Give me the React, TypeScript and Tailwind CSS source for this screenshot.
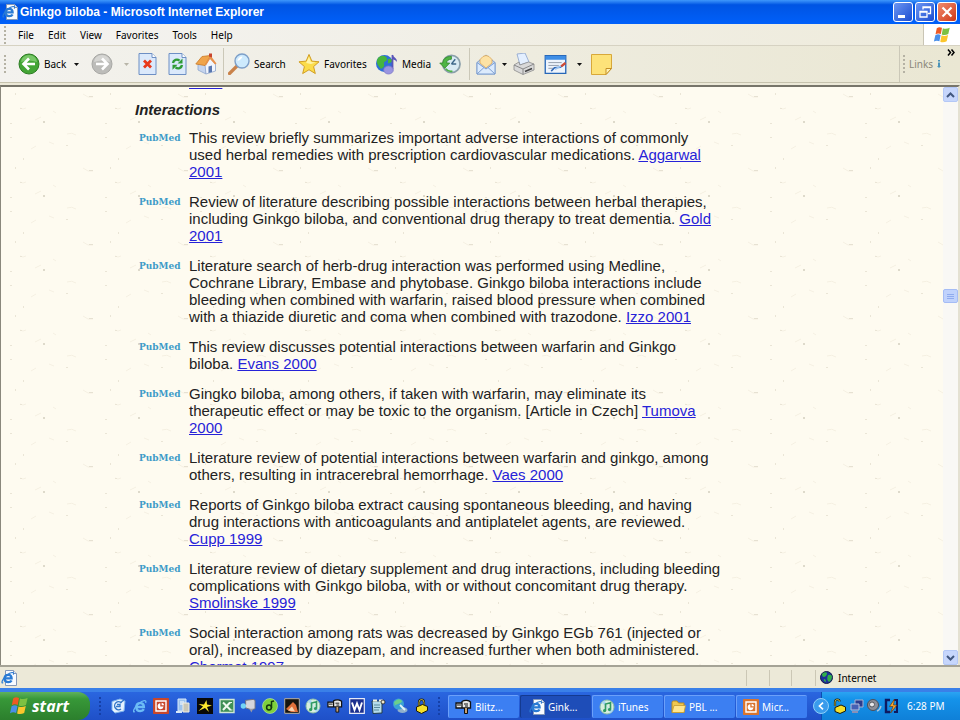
import { Fragment, type ReactNode } from 'react';

interface Citation {
  lines: string[];
  /** Parts of the link text; a second part wraps onto the next line. */
  link: string[];
}

const citations: Citation[] = [
  {
    lines: [
      'This review briefly summarizes important adverse interactions of commonly',
      'used herbal remedies with prescription cardiovascular medications. ',
    ],
    link: ['Aggarwal', '2001'],
  },
  {
    lines: [
      'Review of literature describing possible interactions between herbal therapies,',
      'including Ginkgo biloba, and conventional drug therapy to treat dementia. ',
    ],
    link: ['Gold', '2001'],
  },
  {
    lines: [
      'Literature search of herb-drug interaction was performed using Medline,',
      'Cochrane Library, Embase and phytobase. Ginkgo biloba interactions include',
      'bleeding when combined with warfarin, raised blood pressure when combined',
      'with a thiazide diuretic and coma when combined with trazodone. ',
    ],
    link: ['Izzo 2001'],
  },
  {
    lines: ['This review discusses potential interactions between warfarin and Ginkgo', 'biloba. '],
    link: ['Evans 2000'],
  },
  {
    lines: [
      'Gingko biloba, among others, if taken with warfarin, may eliminate its',
      'therapeutic effect or may be toxic to the organism. [Article in Czech] ',
    ],
    link: ['Tumova', '2000'],
  },
  {
    lines: [
      'Literature review of potential interactions between warfarin and ginkgo, among',
      'others, resulting in intracerebral hemorrhage. ',
    ],
    link: ['Vaes 2000'],
  },
  {
    lines: [
      'Reports of Ginkgo biloba extract causing spontaneous bleeding, and having',
      'drug interactions with anticoagulants and antiplatelet agents, are reviewed.',
      '',
    ],
    link: ['Cupp 1999'],
  },
  {
    lines: [
      'Literature review of dietary supplement and drug interactions, including bleeding',
      'complications with Ginkgo biloba, with or without concomitant drug therapy.',
      '',
    ],
    link: ['Smolinske 1999'],
  },
  {
    lines: [
      'Social interaction among rats was decreased by Ginkgo EGb 761 (injected or',
      'oral), increased by diazepam, and increased further when both administered.',
      '',
    ],
    link: ['Chermet 1997'],
  },
];

/* ---------- shared drawings ---------- */

function WindowsFlag({ size }: { size: number }) {
  return (
    <svg width={size} height={size} viewBox="0 0 20 20" aria-hidden="true">
      <path d="M4.200 2.400C6 1 8 1 10 2L8.700 9C6.800 8 4.800 8 2.800 9.200z" fill="#ee5a24" />
      <path d="M11 2.400C13 3.400 15.500 3.300 18.600 2L17 9C14.500 10.200 11.800 10.300 9.700 9.400z" fill="#7cc142" />
      <path d="M2.600 10.200C4.600 9 6.500 9 8.500 10L7.100 17C5.400 16 3.200 16 1 17.200z" fill="#4a8fe8" />
      <path d="M9.500 10.400C11.600 11.400 14 11.200 16.800 10.100L15.200 17C12.800 18.200 10.200 18.300 8.100 17.400z" fill="#fbc62c" />
    </svg>
  );
}

function IeLetter({ color }: { color: string }) {
  return (
    <g fill="none" stroke={color}>
      <path d="M3.500 8.400H10.600C10.600 5.800 9.200 4.800 7.200 4.800S3.600 6.200 3.600 8.600 5 12.200 7.300 12.200C8.800 12.200 10 11.600 10.600 10.500" strokeWidth="2.300" />
      <path d="M2.200 12.600C-.2 14.500 1 9 5.500 5.400S13.500 1.600 12.300 4.600" strokeWidth="1.200" />
    </g>
  );
}

function IePage() {
  return (
    <svg width="16" height="16" viewBox="0 0 16 16" aria-hidden="true">
      <path d="M4.500.5h8l3 3v12h-11z" fill="#f8fbff" stroke="#8498b8" />
      <path d="M12.500.5v3h3" fill="#dfe8f5" stroke="#8498b8" />
      <IeLetter color="#2a7bd4" />
    </svg>
  );
}

function IeLogo() {
  return (
    <svg width="16" height="16" viewBox="0 0 14 15" aria-hidden="true">
      <IeLetter color="#6cbcf6" />
    </svg>
  );
}

function Mailbox() {
  return (
    <svg width="17" height="16" viewBox="0 0 17 16" aria-hidden="true">
      <path d="M1 4h6v5H1zM7 2.500c3-2 7-1 8.500.5v6H7z" fill="#e8e8e8" stroke="#111" strokeWidth="1.300" />
      <path d="M2 6h4M9 5h4M10 7h3" stroke="#111" />
      <path d="M9.500 9v5.500h3V9" fill="#c8a070" stroke="#111" />
    </svg>
  );
}

function ItunesDisc() {
  return (
    <svg width="16" height="16" viewBox="0 0 16 16" aria-hidden="true">
      <circle cx="8" cy="8" r="7" fill="#d6eedd" stroke="#8fc0a8" />
      <path d="M8 8L2.500 3.800A7 7 0 0 1 6 1.500zM8 8l6 3.500a7 7 0 0 1-3 2.800z" fill="#a9d6f2" />
      <path d="M6.500 11.500V5l5-1.300v6.500" fill="none" stroke="#2f9a62" strokeWidth="1.600" />
      <circle cx="5.600" cy="11.600" r="1.600" fill="#2f9a62" />
      <circle cx="10.500" cy="10.500" r="1.600" fill="#2f9a62" />
    </svg>
  );
}

function PowerPoint({ fill = '#c8472b' }: { fill?: string }) {
  return (
    <svg width="16" height="16" viewBox="0 0 16 16" aria-hidden="true">
      <path d="M.5.5h15v15H.5z" fill={fill} stroke={fill} />
      <path d="M3 3h10v10H3z" fill={fill} stroke="#fff" strokeWidth="1.400" />
      <path d="M7.300 5.200A3 3 0 1 0 10.600 8.600H7.300z" fill="#fff" />
      <path d="M8.600 4.800v2.500h2.600a3 3 0 0 0-2.600-2.500z" fill="#fff" />
    </svg>
  );
}

function Grip({ light = false }: { light?: boolean }) {
  return (
    <div className="flex flex-col gap-[2px]" aria-hidden="true">
      {[0, 1, 2, 3, 4].map((i) => (
        <span key={i} className={light ? 'size-[2px] bg-[#1540a8]' : 'size-[2px] bg-[#b5b2a4]'} />
      ))}
    </div>
  );
}

/* ---------- window chrome ---------- */

function TitleBar() {
  return (
    <header className="flex h-6 shrink-0 items-center gap-[2px] bg-linear-to-b from-[#3f97fb] via-[#0054e3] via-20% to-[#0060fa] pr-[3px] pl-[2px]">
      <IePage />
      <h1 className="flex-1 truncate font-['Liberation_Sans',Arial,sans-serif] text-[12px] leading-4 font-bold text-white">
        Ginkgo biloba - Microsoft Internet Explorer
      </h1>
      <div className="flex gap-[2px]">
        <button aria-label="Minimize" className="size-5 rounded-[3px] border border-white bg-linear-to-br from-[#6c95f2] to-[#1b4bd0]">
          <svg viewBox="0 0 18 18" className="size-full"><path d="M4 12h7v3H4z" fill="#fff" /></svg>
        </button>
        <button aria-label="Restore" className="size-5 rounded-[3px] border border-white bg-linear-to-br from-[#6c95f2] to-[#1b4bd0]">
          <svg viewBox="0 0 18 18" className="size-full">
            <path d="M7 6.500V4h7.500v6.500H12M7 4.500h7.500M4 8.500h7V14H4zM4 9h7" fill="none" stroke="#fff" strokeWidth="1.300" />
          </svg>
        </button>
        <button aria-label="Close" className="size-5 rounded-[3px] border border-white bg-linear-to-br from-[#f08a6c] to-[#cf3510]">
          <svg viewBox="0 0 18 18" className="size-full"><path d="M4.500 4.500l9 9M13.500 4.500l-9 9" stroke="#fff" strokeWidth="2.200" /></svg>
        </button>
      </div>
    </header>
  );
}

function MenuBar() {
  return (
    <nav className="flex h-[22px] shrink-0 items-stretch border-b border-[#d6d2c2] bg-linear-to-r from-[#f4f3f1] to-[#eeebdb]">
      <div className="flex w-[18px] items-center pl-1"><Grip /></div>
      <div className="flex flex-1 items-center gap-[14px]">
        {['File', 'Edit', 'View', 'Favorites', 'Tools', 'Help'].map((m) => (
          <button key={m}>{m}</button>
        ))}
      </div>
      <div className="flex w-[37px] items-center justify-center border-l border-[#c9c5b5] bg-white">
        <WindowsFlag size={18} />
      </div>
    </nav>
  );
}

function DropArrow({ label, width = 'w-3', muted = false }: { label: string; width?: string; muted?: boolean }) {
  return (
    <button aria-label={label} className={`flex shrink-0 items-center justify-center ${width}`}>
      <svg width="5" height="3" viewBox="0 0 5 3"><path d="M0 0h5L2.500 3z" fill={muted ? '#b8b5a8' : '#111'} /></svg>
    </button>
  );
}

function ToolButton({ label, text, width, children }: { label: string; text?: boolean; width: string; children: ReactNode }) {
  return (
    <button aria-label={label} className={`flex h-8 shrink-0 items-center gap-1 ${text ? 'justify-start' : 'justify-center'} ${width}`}>
      {children}
      {text && <span>{label}</span>}
    </button>
  );
}

function Separator() {
  return <div className="mx-1 h-8 w-px shrink-0 bg-[#cbc8b8]" />;
}

function ToolBar() {
  return (
    <div className="flex h-[37px] shrink-0 items-center border-b border-[#c6c2ad] bg-linear-to-r from-[#f3f2ee] to-[#eae7d3]">
      <div className="flex w-[18px] items-center pl-1"><Grip /></div>
      <ToolButton label="Back" text width="w-[50px]">
        <svg width="22" height="22" viewBox="0 0 22 22">
          <circle cx="11" cy="11" r="10" fill="#43a535" stroke="#2c7d23" />
          <path d="M3 9a8 7 0 0 1 16 0q-8-3-16 0z" fill="#8fd67f" opacity=".7" />
          <path d="M17 11H6M11 5.500L5.500 11l5.500 5.500" fill="none" stroke="#fff" strokeWidth="2.600" />
        </svg>
      </ToolButton>
      <DropArrow label="Back history" width="w-4" />
      <ToolButton label="Forward" width="w-9">
        <svg width="22" height="22" viewBox="0 0 22 22">
          <circle cx="11" cy="11" r="10" fill="#bcbcb9" stroke="#a8a8a5" />
          <path d="M3 9a8 7 0 0 1 16 0q-8-3-16 0z" fill="#dcdcda" opacity=".8" />
          <path d="M5 11h11M11 5.500l5.500 5.500-5.500 5.500" fill="none" stroke="#fff" strokeWidth="2.600" />
        </svg>
      </ToolButton>
      <DropArrow label="Forward history" muted />
      <ToolButton label="Stop" width="w-[30px]">
        <svg width="19" height="22" viewBox="0 0 19 22">
          <path d="M1 .5h13l4 4v17H1z" fill="#dbe9fb" stroke="#6d8fc4" />
          <path d="M14 .5v4h4" fill="#fff" stroke="#6d8fc4" />
          <path d="M6 7.500l7 7M13 7.500l-7 7" stroke="#e8381b" strokeWidth="2.800" />
        </svg>
      </ToolButton>
      <ToolButton label="Refresh" width="w-[30px]">
        <svg width="19" height="22" viewBox="0 0 19 22">
          <path d="M1 .5h13l4 4v17H1z" fill="#dbe9fb" stroke="#6d8fc4" />
          <path d="M14 .5v4h4" fill="#fff" stroke="#6d8fc4" />
          <path d="M5 10c.5-3 4-4.500 6.500-2.300M14 12c-.5 3-4 4.500-6.500 2.300" fill="none" stroke="#2e9b34" strokeWidth="2.400" />
          <path d="M14.500 5.500v5h-5zM4.500 16.800v-5h5z" fill="#2e9b34" />
        </svg>
      </ToolButton>
      <ToolButton label="Home" width="w-[27px]">
        <svg width="22" height="22" viewBox="0 0 22 22">
          <path d="M3 11v6l8 4V10z" fill="#c5d4ee" stroke="#8ea4cc" strokeWidth=".8" />
          <path d="M10 12l5-7 5.500 6v7L11 21z" fill="#f2f6fd" stroke="#8ea4cc" strokeWidth=".8" />
          <path d="M.8 11L7 3.500l8.500-1L10 12.500z" fill="#f0a44a" stroke="#c97a26" strokeWidth=".8" />
          <path d="M15.500 2.500l6 8-1.500 1-5-5.500-4 6.500-1-1z" fill="#e8914a" />
          <path d="M14 .5h3v4l-3-1z" fill="#c8452c" />
          <path d="M13.500 13.500l3.500-1v6.500l-3.500 1z" fill="#5877b0" />
        </svg>
      </ToolButton>
      <Separator />
      <ToolButton label="Search" text width="w-[70px]">
        <svg width="22" height="22" viewBox="0 0 22 22">
          <path d="M1.500 20.500l8-8" stroke="#c9824a" strokeWidth="3.200" strokeLinecap="round" />
          <circle cx="14" cy="8" r="7" fill="#cdeafd" stroke="#7d9fc8" strokeWidth="1.400" />
          <path d="M9.500 8a4.500 4.500 0 0 1 5-4.500q-1 3-5 4.500z" fill="#fff" />
        </svg>
      </ToolButton>
      <ToolButton label="Favorites" text width="w-[77px]">
        <svg width="22" height="22" viewBox="0 0 23 22">
          <path d="M11.500 1l3 7 7.500.7-5.700 5 1.800 7.300-6.600-4-6.600 4 1.800-7.300-5.700-5 7.500-.7z" fill="#fbdc4a" stroke="#d09a1c" strokeLinejoin="round" />
          <path d="M11.500 3.500l2 5.500 5 .5-5 1.500-5-1z" fill="#fff4a8" />
        </svg>
      </ToolButton>
      <ToolButton label="Media" text width="w-[60px]">
        <svg width="23" height="22" viewBox="0 0 23 22">
          <circle cx="9.500" cy="10.500" r="8.500" fill="#2e6fd8" />
          <path d="M3 5c4-4 9-2 9 1s-4 2-3 5-3 6-4 4-5-5-2-10z" fill="#46b53c" />
          <path d="M13 6q3-1 4 1t-4 3.500z" fill="#46b53c" />
          <path d="M17.500 2v14" fill="none" stroke="#5a55b8" strokeWidth="1.800" />
          <path d="M17 1.500c1.500 3 5 3 5 7.500-1.500-2-3-2.500-5-2.500z" fill="#5a55b8" />
          <ellipse cx="13.500" cy="17" rx="4.800" ry="4" fill="#9a95e0" stroke="#7d78c8" strokeWidth=".8" />
        </svg>
      </ToolButton>
      <ToolButton label="History" width="w-[30px]">
        <svg width="22" height="22" viewBox="0 0 23 22">
          <circle cx="13" cy="11" r="9" fill="#d9eaf3" stroke="#8ba0ab" strokeWidth="1.800" />
          <path d="M13 11l4-5M13 11h5" stroke="#3c6688" strokeWidth="1.400" />
          <path d="M13 3C7 3 4 6 4 10H.8l5.200 5.500 5.200-5.500H8c0-2.500 2-4 5-4z" fill="#4fb545" stroke="#2f8428" strokeWidth=".8" />
          <path d="M7 16q3 3.500 7 2.500" fill="none" stroke="#4fb545" strokeWidth="1.800" />
        </svg>
      </ToolButton>
      <Separator />
      <ToolButton label="Mail" width="w-6">
        <svg width="20" height="22" viewBox="0 0 20 22">
          <path d="M1 9.500L10 2l9 7.500V21H1z" fill="#bcd6f6" stroke="#7f9fd0" />
          <path d="M4 10V6.500Q10-1.500 16 6.500V10l-6 5z" fill="#fde2a4" stroke="#dca75a" strokeWidth=".8" />
          <path d="M1 9.500l9 6.500 9-6.500V21H1z" fill="#dcebfd" stroke="#7f9fd0" />
          <path d="M1 21l7-6.500M19 21l-7-6.500" stroke="#7f9fd0" />
        </svg>
      </ToolButton>
      <DropArrow label="Mail options" />
      <ToolButton label="Print" width="w-[27px]">
        <svg width="22" height="22" viewBox="0 0 22 22">
          <path d="M4 1l8-1 4 9-9 3z" fill="#e3efff" stroke="#8aa2cc" strokeWidth=".8" />
          <path d="M1 12l5-3 .8 3L15.500 9l5.500 2v6l-11 4.500L1 17z" fill="#d9d9d9" stroke="#8c8c8c" strokeWidth=".8" />
          <path d="M1 12l9 4 11-5M10 16v5.500" fill="none" stroke="#888" />
          <path d="M12 18.500l7-3" stroke="#444" strokeWidth="1.600" />
        </svg>
      </ToolButton>
      <ToolButton label="Edit" width="w-9">
        <svg width="23" height="19" viewBox="0 0 23 20">
          <path d="M.7.700h21.600v18.600H.700z" fill="#eef4fc" stroke="#2767b8" strokeWidth="1.400" />
          <path d="M1 1h21v4H1z" fill="#3e8ee6" />
          <path d="M4 8h14M4 11h11M4 14h7" stroke="#929cab" />
          <path d="M7 17l3.500-3.500 6-.5 2-1.500" fill="none" stroke="#2f67b8" strokeWidth="1.600" />
          <path d="M11 15l6-3.500" stroke="#9cc4f0" strokeWidth="1.800" />
          <path d="M17.500 12l4.500-3.500" stroke="#cf4a35" strokeWidth="2.600" />
        </svg>
      </ToolButton>
      <DropArrow label="Edit with" />
      <ToolButton label="Discuss" width="w-8">
        <svg width="21" height="21" viewBox="0 0 21 21">
          <path d="M.5.500h20v14l-5.500 6H.500z" fill="#fde279" stroke="#d8a83a" />
          <path d="M20.500 14.500H15v6z" fill="#fff2b4" stroke="#c48f26" />
        </svg>
      </ToolButton>
      <div className="flex-1" />
      <div className="flex h-full w-[61px] items-center border-l border-[#cbc8b8] pl-[3px] text-[#8a877b]">
        <Grip />
        <span className="pl-1">Links</span>
        <svg width="4" height="8" viewBox="0 0 4 8" className="ml-1 shrink-0"><path d="M1 0h2v1.500H1zM1 2.500h2V6h1L2 8 0 6h1z" fill="#4b93b8" /></svg>
        <button aria-label="More links" className="ml-[6px] self-start pt-[3px]">
          <svg width="8" height="7" viewBox="0 0 8 7"><path d="M1 .5l2.500 3L1 6.500M4.500.5L7 3.500l-2.500 3" fill="none" stroke="#000" strokeWidth="1.500" /></svg>
        </button>
      </div>
    </div>
  );
}

/* ---------- document ---------- */

function PaperTexture() {
  return (
    <svg className="absolute inset-0 size-full" aria-hidden="true">
      <defs>
        <pattern id="paper" width="95" height="74" patternUnits="userSpaceOnUse">
          <g fill="none" stroke="#f5f0e2">
            <path d="M82 7l5 3h5M19 21q3 2 6 0M34 33l6-3M66 47q5-2 9 1M30 62l5-3M52 24l3 2M48 55l5 2" />
          </g>
          <path d="M88 9h4v1h-4z" fill="#e6e1d2" />
          <path d="M42 34h2v2h-2z" fill="#dedacb" />
          <path d="M14 6h1v2h-1zM9 50h2v1H9zM9 36h2v1H9zM65 58h2v1h-2zM22 71h1v2h-1zM19 21h2v1h-2z" fill="#eae5d6" />
        </pattern>
      </defs>
      <rect width="100%" height="100%" fill="url(#paper)" />
    </svg>
  );
}

function CitationRow({ lines, link }: Citation) {
  return (
    <li className="flex">
      <span className="w-[52px] shrink-0 pl-[2px] font-['DejaVu_Serif',serif] text-[9px] leading-[18px] font-bold text-[#3f9bc8]">PubMed</span>
      <p>
        {lines.map((line, i) => (
          <Fragment key={i}>
            {i > 0 && <br />}
            {line}
          </Fragment>
        ))}
        <a href="#citation" className="text-[#2622d8] underline">
          {link[0]}
          {link[1] && <><br />{link[1]}</>}
        </a>
      </p>
    </li>
  );
}

function ScrollBar() {
  const box = 'flex size-[15px] items-center justify-center rounded-[2px] border border-[#b4c8f6] bg-[#c6d6fc]';
  return (
    <div className="flex w-[15px] shrink-0 flex-col bg-[#f9f8f5]">
      <button aria-label="Scroll up" className={box}>
        <svg width="9" height="6" viewBox="0 0 9 6"><path d="M1 5l3.500-3.500L8 5" fill="none" stroke="#41577f" strokeWidth="2" /></svg>
      </button>
      <div className="basis-[187px]" />
      <div className="flex h-[14px] shrink-0 flex-col items-center justify-center gap-px rounded-[2px] border border-[#a5bcf5] bg-[#c0d2fc]">
        <span className="h-px w-[7px] bg-[#8fabee]" />
        <span className="h-px w-[7px] bg-[#8fabee]" />
        <span className="h-px w-[7px] bg-[#8fabee]" />
      </div>
      <div className="flex-1" />
      <button aria-label="Scroll down" className={box}>
        <svg width="9" height="6" viewBox="0 0 9 6"><path d="M1 1l3.500 3.500L8 1" fill="none" stroke="#41577f" strokeWidth="2" /></svg>
      </button>
    </div>
  );
}

function Document() {
  return (
    <div className="flex min-h-0 flex-1 border-t-2 border-r-2 border-l border-t-[#77756a] border-r-[#e4e1d2] border-l-[#8a887c]">
      <main className="relative min-w-0 flex-1 overflow-hidden bg-[#fefbf0]">
        <PaperTexture />
        {/* the page is scrolled: the end of the previous section shows above the heading */}
        <div className="relative -mt-[14px] pl-[134px] font-['Liberation_Sans',Arial,sans-serif] text-[15px] leading-[17px] text-[#222]">
          <p className="pl-[54px]"><a href="#previous" className="text-[#2622d8] underline">2000</a></p>
          <h2 className="mt-[11px] mb-[11px] font-bold italic">Interactions</h2>
          <ul className="flex flex-col gap-[13px] pl-[2px]">
            {citations.map((c) => <CitationRow key={c.lines[0]} {...c} />)}
          </ul>
        </div>
      </main>
      <ScrollBar />
    </div>
  );
}

function StatusBar() {
  return (
    <footer className="flex h-[23px] shrink-0 items-center border-t-2 border-t-[#a5a396] bg-[#ece9d8] pl-px">
      <IePage />
      <div className="flex-1" />
      <div className="flex h-4">
        <span className="w-[23px] border-l border-[#cbc7b5]" />
        <span className="w-[22px] border-l border-[#cbc7b5]" />
        <span className="w-6 border-l border-[#cbc7b5]" />
        <div className="flex w-[145px] items-center gap-[5px] border-l border-[#cbc7b5] pl-1">
          <svg width="13" height="13" viewBox="0 0 13 13" aria-hidden="true">
            <circle cx="6.500" cy="6.500" r="6" fill="#1c2f9a" stroke="#111a44" />
            <path d="M2 3q3-3 5-1 0 3-3 4-2 0-2-3zM8 4q4-1 4 2t-3 5q-3-2-1-7zM4 8q2 0 2 3-3-1-2-3z" fill="#2fae4a" />
          </svg>
          <span>Internet</span>
        </div>
      </div>
    </footer>
  );
}

/* ---------- taskbar ---------- */

const quickLaunch: { label: string; icon: ReactNode }[] = [
  {
    label: 'Outlook Express',
    icon: (
      <svg width="16" height="16" viewBox="0 0 16 16">
        <path d="M2 3.500L10 1l5 2-1 10-9 2-3-3z" fill="#e6f2ff" stroke="#7fb4ec" />
        <path d="M11.500 5A4 4 0 1 0 11 11M6 8.500h4V6.500H7" fill="none" stroke="#3476c8" strokeWidth="1.400" />
        <path d="M10 5l4-3" stroke="#3476c8" strokeWidth="1.500" />
      </svg>
    ),
  },
  { label: 'Internet Explorer', icon: <IeLogo /> },
  { label: 'PowerPoint', icon: <PowerPoint /> },
  {
    label: 'Show Desktop',
    icon: (
      <svg width="16" height="16" viewBox="0 0 16 16">
        <path d="M3 1h8v12H3z" fill="#9ec4ee" stroke="#d8e8f8" />
        <path d="M5 4h4M5 6h4" stroke="#fff" />
        <path d="M8 5h6v9H8z" fill="#c9c7b8" stroke="#f0efe6" />
        <path d="M1 13h6v2H1z" fill="#d8e8f8" />
      </svg>
    ),
  },
  {
    label: 'Star',
    icon: (
      <svg width="16" height="16" viewBox="0 0 16 16">
        <path d="M0 0h16v16H0z" fill="#080808" />
        <path d="M9.500 2l.5 4.500 5 1-5 1.500 2 5L8 10l-6.500 3 4.500-4.500L1.500 6 7 6.500z" fill="#ffe92e" />
      </svg>
    ),
  },
  {
    label: 'Excel',
    icon: (
      <svg width="16" height="16" viewBox="0 0 16 16">
        <path d="M1 1.500h14v13H1z" fill="#3f8f56" stroke="#cfe8d4" strokeWidth="1.400" />
        <path d="M4 4.500l7.500 7.500M11 4.500L4 12" stroke="#eef8ee" strokeWidth="2" />
        <path d="M10 4.500h3M11 12h2.500" stroke="#eef8ee" />
      </svg>
    ),
  },
  {
    label: 'Network',
    icon: (
      <svg width="17" height="16" viewBox="0 0 17 16">
        <path d="M6 2l8-1 2 1v9l-4 1-6-2z" fill="#d6d6dc" stroke="#72727c" />
        <path d="M10 11l2 4 2-4" fill="#9a9aa6" />
        <path d="M3 8h4" stroke="#fff" />
        <circle cx="3.500" cy="8" r="2.800" fill="#74d4f4" />
      </svg>
    ),
  },
  {
    label: 'Music',
    icon: (
      <svg width="16" height="16" viewBox="0 0 16 16">
        <circle cx="8" cy="8" r="7.500" fill="#7ed03c" stroke="#c6f0a0" strokeWidth=".6" />
        <circle cx="7" cy="9.500" r="2.400" fill="none" stroke="#13360e" strokeWidth="1.500" />
        <path d="M9.500 10V3.500l2.500-.5" fill="none" stroke="#13360e" strokeWidth="1.500" />
      </svg>
    ),
  },
  {
    label: 'Picture viewer',
    icon: (
      <svg width="16" height="16" viewBox="0 0 16 16">
        <path d="M.7.700h14.600v14.600H.700z" fill="#16140f" stroke="#b8afa2" />
        <path d="M2 11L9 4l3 3 2 7H7z" fill="#e0703a" />
        <path d="M4 12.500l4-4 3 5z" fill="#f8d4b0" />
      </svg>
    ),
  },
  { label: 'iTunes', icon: <ItunesDisc /> },
  { label: 'BlitzMail', icon: <Mailbox /> },
  {
    label: 'Word',
    icon: (
      <svg width="16" height="16" viewBox="0 0 16 16">
        <path d="M.7.700h14.600v14.600H.700z" fill="#1b2f8e" stroke="#e6eaf8" strokeWidth="1.200" />
        <path d="M3 4.500L5.500 12 8 5.500l2.500 6.500L13 4.500" fill="none" stroke="#fff" strokeWidth="1.900" />
      </svg>
    ),
  },
  {
    label: 'Notes',
    icon: (
      <svg width="16" height="16" viewBox="0 0 16 16">
        <path d="M2 3h10v12l-9 .500z" fill="#b4dcec" stroke="#223c48" />
        <path d="M4 7h6M4 9.500h6M4 12h5" stroke="#5a8a9c" />
        <path d="M3 2.500h4M9 2.500h4" stroke="#f4f4e0" strokeWidth="2.200" />
        <circle cx="13" cy="4" r="2" fill="#f0e8c8" stroke="#222" strokeWidth=".8" />
      </svg>
    ),
  },
  {
    label: 'Network drive',
    icon: (
      <svg width="16" height="16" viewBox="0 0 16 16">
        <ellipse cx="10.500" cy="12" rx="5" ry="3" fill="#8fb0cc" />
        <circle cx="6.500" cy="6" r="5.500" fill="#3aa2d4" />
        <path d="M2 4q4-4 7-2t-3 4-3 2z" fill="#6bd08a" />
        <path d="M8 7l5 5" stroke="#dff3fb" strokeWidth="1.800" />
      </svg>
    ),
  },
  {
    label: 'Lock',
    icon: (
      <svg width="14" height="16" viewBox="0 0 14 16">
        <path d="M4 8V4.500q0-3 2.500-3T9 4.500V7" fill="none" stroke="#1c1a08" strokeWidth="2.200" />
        <path d="M4 8V4.500q0-3 2.500-3T9 4.500V7" fill="none" stroke="#e8dc60" strokeWidth=".8" />
        <path d="M1.500 9l6-2.500 5 2v4l-6 3-5-2.500z" fill="#f4e02c" stroke="#1c1a08" />
      </svg>
    ),
  },
];

const tasks: { title: string; icon: ReactNode; active?: boolean }[] = [
  { title: 'Blitz...', icon: <Mailbox /> },
  { title: 'Gink...', icon: <IePage />, active: true },
  { title: 'iTunes', icon: <ItunesDisc /> },
  {
    title: 'PBL ...',
    icon: (
      <svg width="15" height="14" viewBox="0 0 15 14" aria-hidden="true">
        <path d="M1 12.500V2.500Q1 1 2.500 1H6l1.500 2H13v9.500z" fill="#f0c850" stroke="#b88a20" />
        <path d="M1 12.500L3 5.500h11.500L13 12.500z" fill="#ffe68e" stroke="#c49a30" strokeWidth=".8" />
      </svg>
    ),
  },
  { title: 'Micr...', icon: <PowerPoint fill="#d9742e" /> },
];

function TaskBar() {
  return (
    <div className="flex h-8 shrink-0 items-stretch border-t-4 border-[#3a80e8] bg-linear-to-b from-[#2a66e0] to-[#1f50c8] text-white">
      <button className="flex w-[90px] shrink-0 items-center gap-[3px] rounded-r-xl bg-linear-to-b from-[#5fb25c] via-[#379838] via-25% to-[#2c7f2d] pl-[9px] font-['Open_Sans',sans-serif] text-[16px] leading-5 font-bold italic">
        <WindowsFlag size={20} />
        start
      </button>
      <div className="flex w-5 shrink-0 items-center justify-center"><Grip light /></div>
      <div className="flex w-[320px] shrink-0 items-center justify-between">
        {quickLaunch.map((q) => (
          <button key={q.label} aria-label={q.label} className="flex w-4 justify-center">{q.icon}</button>
        ))}
      </div>
      <div className="flex w-[18px] shrink-0 items-center justify-center"><Grip light /></div>
      <div className="flex min-w-0 flex-1 gap-px py-[3px] pb-[2px]">
        {tasks.map((t) => (
          <button
            key={t.title}
            className={`flex w-[71px] shrink-0 items-center gap-[3px] rounded-[2px] border-t border-l ${
              t.active ? 'border-[#143a90] bg-[#1e4db8] pl-2' : 'border-[#6ba0fa] bg-[#3c7ff2] pl-[6px]'
            }`}
          >
            {t.icon}
            <span className="whitespace-nowrap">{t.title}</span>
          </button>
        ))}
      </div>
      <div className="flex w-[147px] shrink-0 items-center">
        <button aria-label="Show hidden icons" className="relative z-10 -mr-2 flex size-4 items-center justify-center rounded-full border border-[#8fd0fa] bg-[#3a9cec]">
          <svg width="6" height="8" viewBox="0 0 6 8"><path d="M5 .7L1.500 4 5 7.300" fill="none" stroke="#fff" strokeWidth="1.700" /></svg>
        </button>
        <div className="flex h-full flex-1 items-center gap-px border-l border-[#0a4fb0] bg-linear-to-b from-[#2ba4f2] via-[#1593ea] via-25% to-[#0f80d8] pl-[10px]">
          <svg width="16" height="16" viewBox="0 0 16 16" aria-hidden="true">
            <path d="M3 8V4q0-2.500 2.300-2.500T7.500 3.500" fill="none" stroke="#1c1a08" strokeWidth="2.200" />
            <path d="M3 8V4q0-2.500 2.300-2.500T7.500 3.500" fill="none" stroke="#e8dc60" strokeWidth=".8" />
            <path d="M3 9.500L9 7l4.500 2v4l-5.500 2.500-5-2z" fill="#f4e02c" stroke="#1c1a08" />
          </svg>
          <svg width="16" height="16" viewBox="0 0 16 16" aria-hidden="true">
            <path d="M6 2h8v7H6z" fill="#2b3c8e" stroke="#a8b0d0" />
            <path d="M2 6h8v6H2z" fill="#4560b4" stroke="#b8c0dc" />
            <path d="M3 14h6" stroke="#8890b8" strokeWidth="2" />
          </svg>
          <svg width="16" height="16" viewBox="0 0 16 16" aria-hidden="true">
            <circle cx="7" cy="7" r="5.500" fill="#8c8f98" stroke="#4c4f58" />
            <circle cx="6" cy="6.500" r="2.500" fill="#e8e8ea" stroke="#55585f" />
            <path d="M11 13q3-1 4-5" fill="none" stroke="#a8c4dc" strokeWidth="1.400" />
          </svg>
          <svg width="16" height="16" viewBox="0 0 16 16" aria-hidden="true">
            <path d="M7 2H3v12h4" fill="none" stroke="#0e1a60" strokeWidth="2.400" />
            <path d="M11 2h3v12h-3" fill="none" stroke="#0e1a60" strokeWidth="2" />
            <path d="M11.500 1L6.500 8.500H10L7.500 15l6.500-8h-3.500z" fill="#f9a52a" stroke="#5a2c08" strokeWidth=".6" />
          </svg>
          <time className="pl-[7px]">6:28 PM</time>
        </div>
      </div>
    </div>
  );
}

export default function App() {
  return (
    <div className="flex h-screen w-full flex-col overflow-hidden bg-[#ece9d8] font-['Noto_Sans','Open_Sans',sans-serif] text-[10px] leading-4 text-black">
      <TitleBar />
      <MenuBar />
      <ToolBar />
      <div className="h-[2px] shrink-0 bg-[#ece9d8]" />
      <Document />
      <StatusBar />
      <TaskBar />
    </div>
  );
}
